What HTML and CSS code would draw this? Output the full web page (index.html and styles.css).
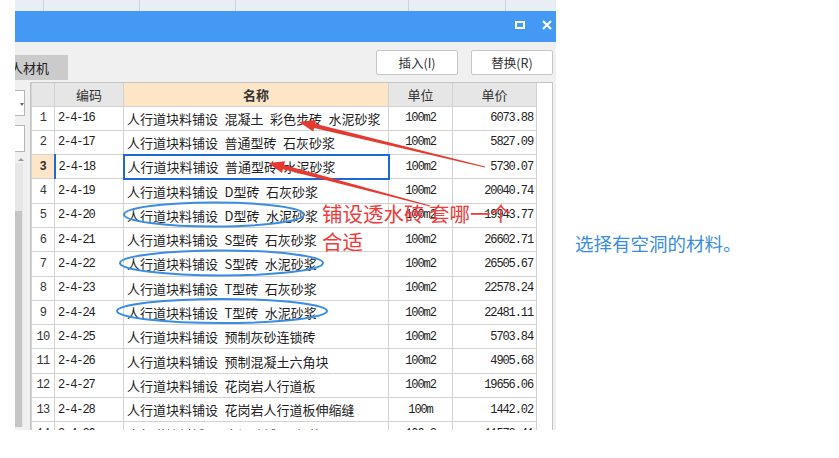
FILE: index.html
```html
<!DOCTYPE html>
<html lang="zh-CN">
<head>
<meta charset="utf-8">
<title>人材机</title>
<link rel="stylesheet" href="styles.css">
</head>
<body>
<div class="page">
  <div class="shot">
    <div class="strip">
      <span class="s1"></span><span class="s2"></span><span class="s2"></span><span class="s3"></span><span class="s4"></span>
    </div>
    <div class="titlebar">
      <span class="ico-max"></span>
      <svg class="ico-close" width="10" height="10" viewBox="0 0 10 10"><path d="M1 1L9 9M9 1L1 9" stroke="#fff" stroke-width="2.2" fill="none"/></svg>
    </div>
    <div class="toolbar">
      <div class="tab">人材机</div>
      <div class="btns">
        <div class="btn">插入(I)</div>
        <div class="btn">替换(R)</div>
      </div>
    </div>
    <div class="main">
      <div class="side">
        <div class="box box1"><span class="caret"></span></div>
        <div class="box box2"></div>
        <span class="up"></span>
        <div class="track"><div class="thumb"></div></div>
      </div>
      <div class="grid">
        <table>
          <colgroup><col class="c-rn"><col class="c-code"><col class="c-name"><col class="c-unit"><col class="c-price"></colgroup>
          <thead>
            <tr><th></th><th>编码</th><th class="nm">名称</th><th>单位</th><th>单价</th></tr>
          </thead>
          <tbody>
            <tr><td class="rn">1</td><td class="code">2-4-16</td><td class="name">人行道块料铺设&ensp;混凝土&ensp;彩色步砖&ensp;水泥砂浆</td><td class="unit">100m2</td><td class="price">6073.88</td></tr>
            <tr><td class="rn">2</td><td class="code">2-4-17</td><td class="name">人行道块料铺设&ensp;普通型砖&ensp;石灰砂浆</td><td class="unit">100m2</td><td class="price">5827.09</td></tr>
            <tr><td class="rn sel">3</td><td class="code sel">2-4-18</td><td class="name sel">人行道块料铺设&ensp;普通型砖&ensp;水泥砂浆</td><td class="unit">100m2</td><td class="price">5730.07</td></tr>
            <tr><td class="rn">4</td><td class="code">2-4-19</td><td class="name">人行道块料铺设&ensp;D型砖&ensp;石灰砂浆</td><td class="unit">100m2</td><td class="price">20040.74</td></tr>
            <tr><td class="rn">5</td><td class="code">2-4-20</td><td class="name">人行道块料铺设&ensp;D型砖&ensp;水泥砂浆</td><td class="unit">100m2</td><td class="price">19943.77</td></tr>
            <tr><td class="rn">6</td><td class="code">2-4-21</td><td class="name">人行道块料铺设&ensp;S型砖&ensp;石灰砂浆</td><td class="unit">100m2</td><td class="price">26602.71</td></tr>
            <tr><td class="rn">7</td><td class="code">2-4-22</td><td class="name">人行道块料铺设&ensp;S型砖&ensp;水泥砂浆</td><td class="unit">100m2</td><td class="price">26505.67</td></tr>
            <tr><td class="rn">8</td><td class="code">2-4-23</td><td class="name">人行道块料铺设&ensp;T型砖&ensp;石灰砂浆</td><td class="unit">100m2</td><td class="price">22578.24</td></tr>
            <tr><td class="rn">9</td><td class="code">2-4-24</td><td class="name">人行道块料铺设&ensp;T型砖&ensp;水泥砂浆</td><td class="unit">100m2</td><td class="price">22481.11</td></tr>
            <tr><td class="rn">10</td><td class="code">2-4-25</td><td class="name">人行道块料铺设&ensp;预制灰砂连锁砖</td><td class="unit">100m2</td><td class="price">5703.84</td></tr>
            <tr><td class="rn">11</td><td class="code">2-4-26</td><td class="name">人行道块料铺设&ensp;预制混凝土六角块</td><td class="unit">100m2</td><td class="price">4905.68</td></tr>
            <tr><td class="rn">12</td><td class="code">2-4-27</td><td class="name">人行道块料铺设&ensp;花岗岩人行道板</td><td class="unit">100m2</td><td class="price">19656.06</td></tr>
            <tr><td class="rn">13</td><td class="code">2-4-28</td><td class="name">人行道块料铺设&ensp;花岗岩人行道板伸缩缝</td><td class="unit">100m</td><td class="price">1442.02</td></tr>
            <tr><td class="rn">14</td><td class="code">2-4-29</td><td class="name">人行道块料铺设&ensp;广场砖铺设&ensp;规格100×100</td><td class="unit">100m2</td><td class="price">11572.41</td></tr>
          </tbody>
        </table>
      </div>
      <div class="edge"></div>
    </div>
  </div>
  <p class="note">选择有空洞的材料。</p>
  <svg class="marks" width="839" height="458" viewBox="0 0 839 458">
    <g fill="none" stroke="#3a8de0" stroke-width="2">
      <ellipse cx="214" cy="214.5" rx="90" ry="12"/>
      <ellipse cx="221.5" cy="263" rx="101.5" ry="12.5"/>
      <ellipse cx="222" cy="311" rx="105" ry="12"/>
    </g>
    <g fill="#e53a2f">
      <polygon points="299,122 316,120 315.1,123.7 485.1,166.5 484.9,167.5 314.1,127.9 313.2,131.6"/>
      <polygon points="268,163 285,161.3 284.1,165 430.1,205.5 429.9,206.5 282.9,169.2 282,172.9"/>
    </g>
  </svg>
  <div class="callout">铺设透水砖 套哪一个<br>合适</div>
</div>
</body>
</html>
```

FILE: styles.css
```css
* { box-sizing: border-box; }

body {
  margin: 0;
  background: #fff;
  width: 839px;
  height: 458px;
  overflow: hidden;
  font-family: "Noto Sans CJK SC", sans-serif;
}

.page {
  position: relative;
  display: flex;
  align-items: flex-start;
  height: 458px;
}

.shot {
  margin-left: 15px;
  width: 541px;
  height: 430px;
  flex: none;
  display: flex;
  flex-direction: column;
  overflow: hidden;
  background: #f0f0f0;
}

/* top strip of the window behind */
.strip {
  height: 11px;
  flex: none;
  display: flex;
  background: #e9eef4;
}
.strip span { flex: none; border-right: 1px solid #cbd4de; }
.strip .s1 { width: 29px; }
.strip .s2 { width: 96px; }
.strip .s3 { width: 173px; }
.strip .s4 { width: 97px; }

.titlebar {
  height: 31px;
  flex: none;
  background: #4499f5;
  display: flex;
  justify-content: flex-end;
  align-items: center;
  gap: 17px;
  padding-right: 4px;
  padding-bottom: 3px;
}
.ico-max {
  width: 10px;
  height: 8px;
  border: 2px solid #fff;
}
.ico-close { display: block; }

.toolbar {
  height: 40px;
  flex: none;
  display: flex;
  align-items: flex-start;
}
.tab {
  margin-top: 13px;
  width: 53px;
  height: 25px;
  background: #cbcbcb;
  color: #222;
  font-size: 13px;
  line-height: 25px;
  white-space: nowrap;
  overflow: hidden;
  text-indent: -5px;
}
.btns {
  margin-left: auto;
  margin-right: 3px;
  margin-top: 8px;
  display: flex;
  gap: 13px;
}
.btn {
  width: 82px;
  height: 25px;
  background: #fff;
  border: 1px solid #c6c6c6;
  border-radius: 2px;
  color: #333;
  font-size: 12.5px;
  display: flex;
  align-items: center;
  justify-content: center;
}

.main {
  flex: 1;
  min-height: 0;
  display: flex;
}

.side {
  width: 15px;
  flex: none;
  display: flex;
  flex-direction: column;
}
.box {
  width: 10px;
  flex: none;
  background: #fff;
  border: 1px solid #b6b6b6;
  border-left: none;
  position: relative;
}
.box1 { margin-top: 8px; height: 26px; }
.box2 { margin-top: 9px; height: 27px; }
.caret {
  position: absolute;
  left: 5px;
  top: 12px;
  border-left: 2px solid transparent;
  border-right: 2px solid transparent;
  border-top: 3px solid #666;
}
.up {
  flex: none;
  margin-top: 6px;
  margin-left: 3px;
  width: 0;
  height: 0;
  border-left: 3px solid transparent;
  border-right: 3px solid transparent;
  border-bottom: 3px solid #999;
}
.track {
  flex: 1;
  margin-top: 2px;
  margin-bottom: 3px;
  width: 8px;
  background: #e6e6e6;
  display: flex;
  flex-direction: column;
}
.thumb {
  flex: 1;
  margin-top: 48px;
  width: 7px;
  background: #c5c5c5;
}

.grid {
  width: 523px;
  flex: none;
  background: #fff;
  border: 1px solid #c4c4c4;
  border-bottom: none;
  overflow: hidden;
}
.edge { flex: 1; }

table {
  border-collapse: collapse;
  table-layout: fixed;
  width: 505px;
}
.c-rn { width: 23px; }
.c-code { width: 69px; }
.c-name { width: 265px; }
.c-unit { width: 64px; }
.c-price { width: 84px; }

th, td {
  border: 1px solid #d2d2d2;
  padding: 0;
  white-space: pre;
  overflow: hidden;
  color: #222;
}
thead tr { height: 23px; }
th {
  border-top: none;
  background: #e6e6e6;
  font-weight: normal;
  font-size: 13px;
  color: #333;
  text-align: center;
}
th.nm { background: #fde5c8; font-weight: bold; }
tbody tr { height: 24.3px; }

td.rn {
  text-align: center;
  font-family: "Liberation Mono", monospace;
  font-size: 12px;
  letter-spacing: -0.8px;
  color: #333;
}
td.rn.sel { background: #fde5c8; font-weight: bold; }
td.code, td.unit, td.price {
  font-family: "Liberation Mono", monospace;
  font-size: 12px;
  letter-spacing: -1.1px;
}
td.code { padding-left: 3px; }
td.code.sel { border-left: 2px solid #1c6ad6; }
td.name {
  padding-left: 3px;
  font-size: 13px;
}
td.name.sel { border: 2px solid #1c6ad6; }
td.unit { text-align: center; }
td.price {
  text-align: right;
  padding-right: 3px;
}

.note {
  margin: 231px 0 0 19px;
  font-size: 18.5px;
  line-height: 24px;
  color: #3b8de0;
  white-space: nowrap;
}

.marks {
  position: absolute;
  left: 0;
  top: 0;
  pointer-events: none;
}

.callout {
  position: absolute;
  left: 322px;
  top: 199px;
  font-size: 20.5px;
  line-height: 28px;
  color: #ee3b3b;
  white-space: pre;
  pointer-events: none;
}
```
